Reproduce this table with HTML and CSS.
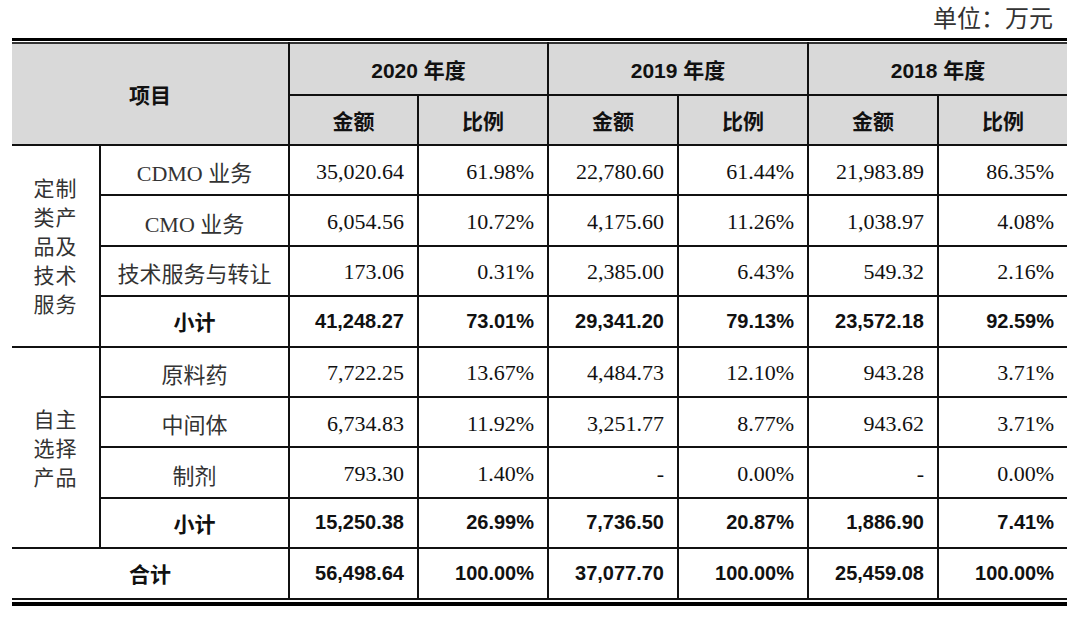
FILE: index.html
```html
<!DOCTYPE html>
<html lang="zh-CN">
<head>
<meta charset="utf-8">
<title>收入构成</title>
<link rel="stylesheet" href="styles.css">
</head>
<body>
<div class="page">
  <div class="unit">单位：万元</div>
  <div class="tbl-wrap">
    <table class="tbl">
      <colgroup>
        <col class="c-group"><col class="c-item">
        <col class="c-num"><col class="c-num2">
        <col class="c-num2"><col class="c-num2">
        <col class="c-num2"><col class="c-num">
      </colgroup>
      <thead>
        <tr class="h1">
          <th rowspan="2" colspan="2" class="th-item">项目</th>
          <th colspan="2">2020 年度</th>
          <th colspan="2">2019 年度</th>
          <th colspan="2">2018 年度</th>
        </tr>
        <tr class="h2">
          <th>金额</th><th>比例</th>
          <th>金额</th><th>比例</th>
          <th>金额</th><th>比例</th>
        </tr>
      </thead>
      <tbody>
        <tr>
          <td rowspan="4" class="grp"><span class="grp-text">定制<br>类产<br>品及<br>技术<br>服务</span></td>
          <td class="lbl">CDMO 业务</td>
          <td class="n">35,020.64</td><td class="n">61.98%</td>
          <td class="n">22,780.60</td><td class="n">61.44%</td>
          <td class="n">21,983.89</td><td class="n">86.35%</td>
        </tr>
        <tr>
          <td class="lbl">CMO 业务</td>
          <td class="n">6,054.56</td><td class="n">10.72%</td>
          <td class="n">4,175.60</td><td class="n">11.26%</td>
          <td class="n">1,038.97</td><td class="n">4.08%</td>
        </tr>
        <tr>
          <td class="lbl">技术服务与转让</td>
          <td class="n">173.06</td><td class="n">0.31%</td>
          <td class="n">2,385.00</td><td class="n">6.43%</td>
          <td class="n">549.32</td><td class="n">2.16%</td>
        </tr>
        <tr class="sub">
          <td class="lbl">小计</td>
          <td class="n">41,248.27</td><td class="n">73.01%</td>
          <td class="n">29,341.20</td><td class="n">79.13%</td>
          <td class="n">23,572.18</td><td class="n">92.59%</td>
        </tr>
        <tr>
          <td rowspan="4" class="grp"><span class="grp-text">自主<br>选择<br>产品</span></td>
          <td class="lbl">原料药</td>
          <td class="n">7,722.25</td><td class="n">13.67%</td>
          <td class="n">4,484.73</td><td class="n">12.10%</td>
          <td class="n">943.28</td><td class="n">3.71%</td>
        </tr>
        <tr>
          <td class="lbl">中间体</td>
          <td class="n">6,734.83</td><td class="n">11.92%</td>
          <td class="n">3,251.77</td><td class="n">8.77%</td>
          <td class="n">943.62</td><td class="n">3.71%</td>
        </tr>
        <tr>
          <td class="lbl">制剂</td>
          <td class="n">793.30</td><td class="n">1.40%</td>
          <td class="n">-</td><td class="n">0.00%</td>
          <td class="n">-</td><td class="n">0.00%</td>
        </tr>
        <tr class="sub">
          <td class="lbl">小计</td>
          <td class="n">15,250.38</td><td class="n">26.99%</td>
          <td class="n">7,736.50</td><td class="n">20.87%</td>
          <td class="n">1,886.90</td><td class="n">7.41%</td>
        </tr>
        <tr class="sub total">
          <td colspan="2" class="lbl">合计</td>
          <td class="n">56,498.64</td><td class="n">100.00%</td>
          <td class="n">37,077.70</td><td class="n">100.00%</td>
          <td class="n">25,459.08</td><td class="n">100.00%</td>
        </tr>
      </tbody>
    </table>
  </div>
</div>
</body>
</html>
```
FILE: styles.css
```css
html, body {
  margin: 0;
  padding: 0;
  background: #fff;
}

.page {
  width: 1080px;
  padding-left: 12px;
  box-sizing: border-box;
  font-family: "Liberation Serif", "Noto Sans CJK SC", serif;
  color: #1e1e1e;
}

.unit {
  width: 1055px;
  height: 38px;
  line-height: 38px;
  text-align: right;
  font-size: 24px;
  padding-right: 14px;
  box-sizing: border-box;
  color: #333;
}

.tbl-wrap {
  width: 1055px;
  border-top: 3px solid #000;
  padding-top: 1px;
  border-bottom: 4px solid #000;
  padding-bottom: 2px;
}

.tbl {
  width: 1055px;
  table-layout: fixed;
  border-collapse: collapse;
  border-top: 2px solid #333;
  border-bottom: 2px solid #111;
}

.c-group { width: 88px; }
.c-item { width: 189px; }
.c-num { width: 129px; }
.c-num2 { width: 130px; }

.tbl th,
.tbl td {
  border: 2px solid #111;
  padding: 0;
  overflow: hidden;
  white-space: nowrap;
}

.tbl tr > :first-child { border-left: none; }
.tbl tr > :last-child { border-right: none; }

.tbl th {
  background: #d9d9d9;
  font-family: "Liberation Sans", "Noto Sans CJK SC", sans-serif;
  font-weight: bold;
  font-size: 21px;
  color: #111;
  text-align: center;
}

.h1 { height: 52px; }
.h2 { height: 50px; }

.tbl tbody tr { height: 50.4px; }

.tbl tr.h1 th { border-top: none; }
.tbl tr.h1 .th-item { border-left: none; }

.grp {
  text-align: center;
  vertical-align: middle;
  font-size: 21px;
  line-height: 29px;
  color: #333;
  border-left: none;
}

.grp-text {
  display: inline-block;
  letter-spacing: 1px;
  padding-top: 4px;
}

.lbl {
  text-align: center;
  font-size: 22px;
  color: #333;
  padding-top: 2px !important;
}

.n {
  text-align: right;
  padding-right: 13px !important;
  padding-top: 3px !important;
  font-size: 22px;
  color: #111;
}

.sub td {
  font-family: "Liberation Sans", "Noto Sans CJK SC", sans-serif;
  font-weight: bold;
  font-size: 20px;
  color: #111;
  padding-top: 0 !important;
}

.sub td.lbl { font-size: 21px; }

.total td { border-bottom: none; }
```
